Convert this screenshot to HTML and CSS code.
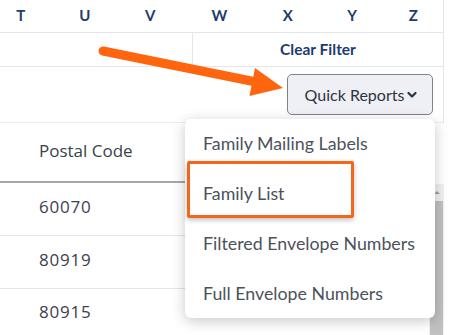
FILE: index.html
```html
<!DOCTYPE html>
<html>
<head>
<meta charset="utf-8">
<link rel="stylesheet" href="styles.css">
</head>
<body>
<div class="page">
  <div class="panel">
    <div class="letters">
      <span>T</span><span>U</span><span>V</span><span>W</span><span>X</span><span>Y</span><span>Z</span>
    </div>
    <div class="filter-row">
      <div class="cell"></div>
      <div class="cell clear">Clear Filter</div>
    </div>
    <div class="toolbar">
      <button class="qr-btn">Quick Reports<svg class="chev" width="10" height="8" viewBox="0 0 10 8"><path d="M1.5 2 L5 5.5 L8.5 2" fill="none" stroke="#2e3440" stroke-width="2.2" stroke-linecap="round" stroke-linejoin="round"/></svg></button>
    </div>
  </div>
  <div class="table-wrap">
    <div class="table">
      <div class="thead">Postal Code</div>
      <div class="trow">60070</div>
      <div class="trow">80919</div>
      <div class="trow last">80915</div>
    </div>
    <div class="scrollbar">
      <div class="sb-top"><svg width="8" height="5" viewBox="0 0 8 5"><path d="M1 4 L4 1 L7 4 Z" fill="#a0a0a0"/></svg></div>
      <div class="sb-thumb"></div>
    </div>
  </div>

  <div class="dropdown">
    <div class="item">Family Mailing Labels</div>
    <div class="item">Family List</div>
    <div class="item">Filtered Envelope Numbers</div>
    <div class="item">Full Envelope Numbers</div>
    <div class="highlight"></div>
  </div>

  <svg class="arrow" width="454" height="335" viewBox="0 0 454 335">
    <line x1="103" y1="51" x2="256" y2="82" stroke="#ff650f" stroke-width="9" stroke-linecap="round"/>
    <polygon points="255,68 283,88 249.5,96" fill="#ff650f"/>
  </svg>
</div>
</body>
</html>
```

FILE: styles.css
```css
* { box-sizing: border-box; }
html, body { margin: 0; padding: 0; background: #fff; }
body { width: 454px; height: 335px; overflow: hidden; font-family: "Lato", "Open Sans", sans-serif; }

.page { position: relative; width: 454px; height: 335px; }

.panel { width: 444px; border-right: 1px solid #e3e5e8; }

.letters {
  height: 33px;
  display: grid;
  grid-template-columns: repeat(7, 1fr);
  align-items: center;
  border-bottom: 1px solid #e3e5e8;
  padding: 0 0 3px 0;
  color: #1c3d6e;
  font-weight: 700;
  font-size: 15px;
  font-family: "Lato", sans-serif;
}
.letters span { text-align: center; }
.letters span:nth-child(1) { margin-right: 22px; }
.letters span:nth-child(2) { margin-right: 20px; }
.letters span:nth-child(3) { margin-right: 16px; }
.letters span:nth-child(4) { margin-right: 4px; }
.letters span:nth-child(5) { margin-left: 6px; }
.letters span:nth-child(6) { margin-left: 8px; }
.letters span:nth-child(7) { margin-left: 4px; }

.filter-row {
  height: 34px;
  display: grid;
  grid-template-columns: 192px 1fr;
  border-bottom: 1px solid #e3e5e8;
}
.filter-row .cell + .cell { border-left: 1px solid #e3e5e8; }
.clear {
  display: flex; align-items: center; justify-content: center;
  color: #1c3d6e; font-weight: 700; font-size: 15.5px;
  padding-bottom: 2px;
}

.toolbar {
  height: 56px;
  display: flex;
  justify-content: flex-end;
  align-items: flex-start;
  padding: 7px 10px 0 0;
  border-bottom: 1px solid #eceef0;
}
.qr-btn {
  width: 146px; height: 41px;
  background: #eef0f5;
  border: 1px solid #7d828c;
  border-radius: 5px;
  font-family: "Lato", sans-serif;
  font-size: 16px;
  color: #2e3440;
  display: flex; align-items: center; justify-content: center;
  gap: 3px;
  padding: 0 0 0 2px;
}
.chev { margin-top: 1px; }

.table-wrap { display: flex; width: 444px; }
.table { flex: 1; font-family: "Open Sans", sans-serif; color: #3a414d; font-size: 17px; }
.thead {
  height: 60px;
  padding-left: 39px;
  display: flex; align-items: center;
  border-bottom: 2px solid #a4a7ab;
  padding-bottom: 3px;
}
.trow {
  height: 53px;
  padding-left: 39px;
  display: flex; align-items: center;
  border-bottom: 1px solid #e4e6e8;
  padding-bottom: 5px;
  letter-spacing: 0.8px;
}
.trow.last { border-bottom: none; height: 50px; }
.scrollbar {
  width: 15px;
  margin-top: 61px;
  display: flex; flex-direction: column;
  background: #f1f1f1;
}
.sb-top { height: 17px; display: flex; align-items: center; justify-content: center; }
.sb-thumb { flex: 1; background: #c1c1c1; margin: 0 1px; }

.dropdown {
  position: absolute;
  left: 185px; top: 119px;
  width: 250px; height: 199px;
  background: #fff;
  border-radius: 6px;
  box-shadow: 0 3px 14px rgba(0,0,0,0.22);
  font-family: "Lato", sans-serif;
  font-size: 17.8px;
  color: #4c525b;
}
.item { height: 50px; display: flex; align-items: center; padding-left: 18px; padding-bottom: 3px; }
.highlight {
  position: absolute;
  left: 2px; top: 42px;
  width: 167px; height: 57px;
  border: 3px solid #f4661b;
  border-radius: 2px;
  box-shadow: 0 2px 5px rgba(0,0,0,0.25);
}

.arrow { position: absolute; left: 0; top: 0; pointer-events: none; }
```
